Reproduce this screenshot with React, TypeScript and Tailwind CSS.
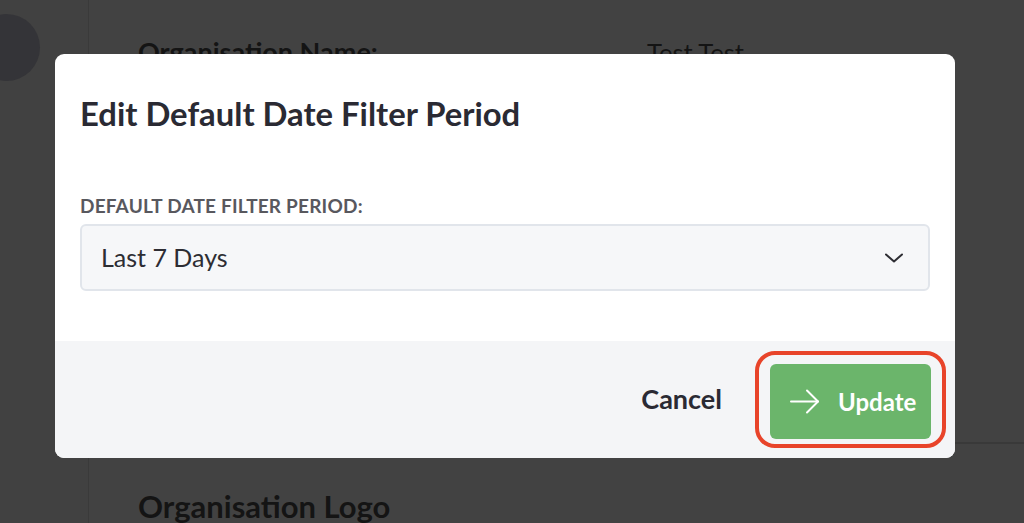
export default function App() {
  return (
    <div
      className="relative w-[1024px] h-[523px] overflow-hidden bg-[#424242]"
      style={{ fontFamily: "Lato, 'Noto Sans', sans-serif" }}
    >
      {/* background page (dimmed) */}
      <div className="flex h-full">
        <aside className="relative w-[89px] shrink-0 border-r border-[#3a3a3a] bg-[#414141]">
          <div className="absolute -left-[27px] top-[14px] w-[67px] h-[67px] rounded-full bg-[#343438]" />
        </aside>
        <main className="flex-1 flex flex-col">
          <div className="flex pl-[49px] pt-[36px] text-[27px] leading-[32px] font-bold text-[#141414]">
            <span className="w-[509px]">Organisation Name:</span>
            <span className="font-normal text-[25.5px]">Test Test</span>
          </div>
          <div className="mt-[374px] border-t-2 border-[#393939]" />
          <div className="pl-[49px] pt-[44px] text-[31px] leading-[36px] font-bold text-[#141414]">
            Organisation Logo
          </div>
        </main>
      </div>

      {/* modal */}
      <div className="absolute left-[55px] top-[54px] w-[900px] rounded-[9px] bg-white overflow-hidden">
        <div className="px-[25px] pt-[40px] pb-[50px]">
          <h2 className="text-[32.8px] font-bold text-[#2a2a33] leading-[40px]">
            Edit Default Date Filter Period
          </h2>
          <label className="block mt-[60px] text-[19px] leading-[24px] font-bold uppercase tracking-[0.2px] text-[#58585e]">
            Default Date Filter Period:
          </label>
          <div className="mt-[6px] h-[67px] flex items-center justify-between rounded-[6px] border-2 border-[#e1e5eb] bg-[#f6f7f9] pl-[19px] pr-[25px]">
            <span className="text-[25px] text-[#2d2d33]">Last 7 Days</span>
            <svg width="18" height="10" viewBox="0 0 18 10" fill="none" stroke="#2d2d33" strokeWidth="2" strokeLinecap="round" strokeLinejoin="round">
              <polyline points="1 1.5 9 8.5 17 1.5" />
            </svg>
          </div>
        </div>
        <div className="h-[117px] bg-[#f4f5f7] flex items-center justify-end pr-[9px]">
          <button className="mr-[33px] text-[27px] font-bold text-[#2a2a33]">Cancel</button>
          <div className="rounded-[20px] border-[4px] border-[#e8442a] pt-[9px] pb-[5px] px-[11px]">
            <button className="flex items-center h-[75px] w-[161px] rounded-[6px] bg-[#6bb56b] pl-[20px] text-white">
              <svg width="30" height="25" viewBox="0 0 30 25" fill="none" stroke="white" strokeWidth="2" strokeLinecap="round" strokeLinejoin="round">
                <path d="M1 12.5h27" />
                <path d="M17 1.5l11 11-11 11" />
              </svg>
              <span className="ml-[18px] text-[24px] font-bold">Update</span>
            </button>
          </div>
        </div>
      </div>
    </div>
  );
}
